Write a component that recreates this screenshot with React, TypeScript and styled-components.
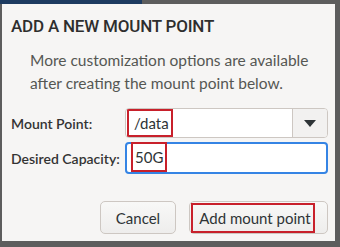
import React from "react";
import styled, { createGlobalStyle } from "styled-components";

const Global = createGlobalStyle`
  html, body { margin: 0; padding: 0; }
  body { background: #5b5b5b; font-family: "Lato", "Noto Sans", sans-serif; }
`;

const Screen = styled.div`
  position: relative;
  width: 340px;
  height: 247px;
  background: #5d5d5d;
  overflow: hidden;
  padding: 4px 5px 6px 2px;
  box-sizing: border-box;
`;

const TopStrip = styled.div`
  position: absolute;
  left: 0;
  top: 0;
  width: 142px;
  height: 4px;
  background: #1d3b60;
`;

const Dialog = styled.div`
  background: #f6f5f4;
  height: 100%;
  box-sizing: border-box;
  padding: 11px 7px 0 9px;
  display: flex;
  flex-direction: column;
  color: #2e3436;
`;

const Title = styled.h1`
  margin: 0;
  font-family: "Roboto", "Lato", sans-serif;
  font-size: 17px;
  font-weight: 500;
  line-height: 22px;
  letter-spacing: -0.2px;
  color: #2e2e2e;
`;

const Note = styled.p`
  margin: 12px 0 0 19px;
  font-size: 15.5px;
  line-height: 23px;
  color: #555753;
`;

const Form = styled.div`
  display: grid;
  grid-template-columns: 114px 1fr;
  row-gap: 4px;
  margin-top: 13px;
  align-items: center;
`;

const Label = styled.label`
  font-size: 14px;
  font-weight: 600;
  color: #333;
`;

const Combo = styled.div`
  display: flex;
  height: 30px;
  border: 1px solid #cdc7c2;
  border-radius: 4px;
  background: #fff;
  overflow: hidden;
  box-sizing: border-box;
`;

const ComboText = styled.div`
  flex: 1;
  display: flex;
  align-items: center;
  padding-left: 1px;
`;

const ComboButton = styled.div`
  width: 34px;
  border-left: 1px solid #cdc7c2;
  background: #f2f1f0;
  display: flex;
  align-items: center;
  justify-content: center;
`;

const Entry = styled.div`
  display: flex;
  align-items: flex-end;
  height: 32px;
  border: 2px solid #3584e4;
  border-radius: 4px;
  background: #fff;
  box-sizing: border-box;
  padding-left: 4px;
`;

const Marked = styled.span<{ $h: number; $pl: number }>`
  display: inline-flex;
  align-items: center;
  box-sizing: border-box;
  height: ${(p) => p.$h}px;
  border: 2px solid #c8202b;
  padding: 0 2px 0 ${(p) => p.$pl}px;
  font-size: 15px;
  color: #2e3436;
`;

const Actions = styled.div`
  display: flex;
  justify-content: flex-end;
  gap: 13px;
  margin-top: auto;
  margin-bottom: 7px;
`;

const Button = styled.button<{ $w: number }>`
  position: relative;
  width: ${(p) => p.$w}px;
  height: 33px;
  border: 1px solid #cdc7c2;
  border-radius: 5px;
  background: linear-gradient(#f8f8f7, #eeedec);
  font-family: inherit;
  font-size: 15px;
  color: #2e3436;
  padding: 0;
  display: flex;
  align-items: center;
  justify-content: center;
`;

const RedFrame = styled.span`
  position: absolute;
  left: 1px;
  top: 1px;
  right: 12px;
  bottom: 0px;
  border: 2px solid #c8202b;
  display: flex;
  align-items: center;
  justify-content: center;
  padding-left: 4px;
`;

export default function App() {
  return (
    <>
      <Global />
      <Screen>
        <TopStrip />
        <Dialog>
          <Title>ADD A NEW MOUNT POINT</Title>
          <Note>
            More customization options are available
            <br />
            after creating the mount point below.
          </Note>
          <Form>
            <Label>Mount Point:</Label>
            <Combo>
              <ComboText>
                <Marked $h={28} $pl={5}>/data</Marked>
              </ComboText>
              <ComboButton>
                <svg width="12" height="7" viewBox="0 0 12 7">
                  <path d="M0 0 H12 L6 7 Z" fill="#2e3436" />
                </svg>
              </ComboButton>
            </Combo>
            <Label>Desired Capacity:</Label>
            <Entry>
              <Marked $h={30} $pl={2}>50G</Marked>
            </Entry>
          </Form>
          <Actions>
            <Button $w={76}>Cancel</Button>
            <Button $w={139}>
              <RedFrame>Add mount point</RedFrame>
            </Button>
          </Actions>
        </Dialog>
      </Screen>
    </>
  );
}
